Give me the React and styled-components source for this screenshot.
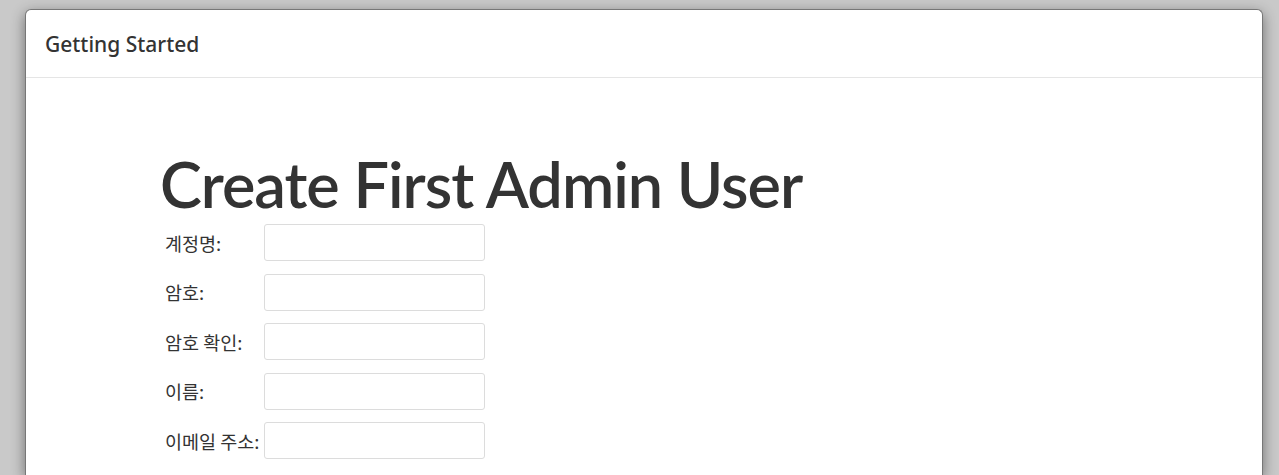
import React from "react";
import styled, { createGlobalStyle } from "styled-components";

const GlobalStyle = createGlobalStyle`
  html, body {
    margin: 0;
    padding: 0;
    background: #c9c9c9;
    overflow: hidden;
  }
  body {
    font-family: "Noto Sans", "Noto Sans CJK KR", sans-serif;
    color: #333;
  }
`;

const Backdrop = styled.div`
  display: flex;
  height: 475px;
  padding: 9px 16px 0 25px;
  box-sizing: border-box;
  background: #c9c9c9;
`;

const Modal = styled.div`
  flex: 1;
  background: #fff;
  border: 1px solid #777;
  border-bottom: none;
  border-radius: 6px 6px 0 0;
  box-shadow: 0 4px 14px rgba(0, 0, 0, 0.45);
  display: flex;
  flex-direction: column;
`;

const Header = styled.div`
  height: 67px;
  display: flex;
  align-items: center;
  padding: 0 19px;
  border-bottom: 1px solid #e5e5e5;
`;

const Title = styled.h4`
  margin: 0;
  font-size: 21px;
  font-weight: 500;
  color: #333;
`;

const Body = styled.div`
  padding: 66px 0 0 134px;
`;

const Heading = styled.h1`
  margin: 0;
  font-family: "Lato", sans-serif;
  font-size: 63px;
  font-weight: 600;
  letter-spacing: -1px;
  line-height: 80px;
  color: #333;
`;

const Form = styled.div`
  display: grid;
  grid-template-columns: 99px 221px;
  row-gap: 12.5px;
  padding-left: 5px;
`;

const Label = styled.label`
  display: flex;
  align-items: center;
  font-family: "Noto Sans CJK KR", sans-serif;
  font-size: 18.5px;
  color: #333;
  white-space: nowrap;
`;

const Input = styled.input`
  height: 37px;
  box-sizing: border-box;
  border: 1px solid #dcdcdc;
  border-radius: 3px;
  background: #fff;
  padding: 0 8px;
  font-size: 14px;
  outline: none;
`;

const fields = [
  { label: "계정명:", type: "text" },
  { label: "암호:", type: "password" },
  { label: "암호 확인:", type: "password" },
  { label: "이름:", type: "text" },
  { label: "이메일 주소:", type: "email" },
];

export default function App() {
  return (
    <>
      <GlobalStyle />
      <Backdrop>
        <Modal>
          <Header>
            <Title>Getting Started</Title>
          </Header>
          <Body>
            <Heading>Create First Admin User</Heading>
            <Form>
              {fields.map((f) => (
                <React.Fragment key={f.label}>
                  <Label>{f.label}</Label>
                  <Input type={f.type} />
                </React.Fragment>
              ))}
            </Form>
          </Body>
        </Modal>
      </Backdrop>
    </>
  );
}
